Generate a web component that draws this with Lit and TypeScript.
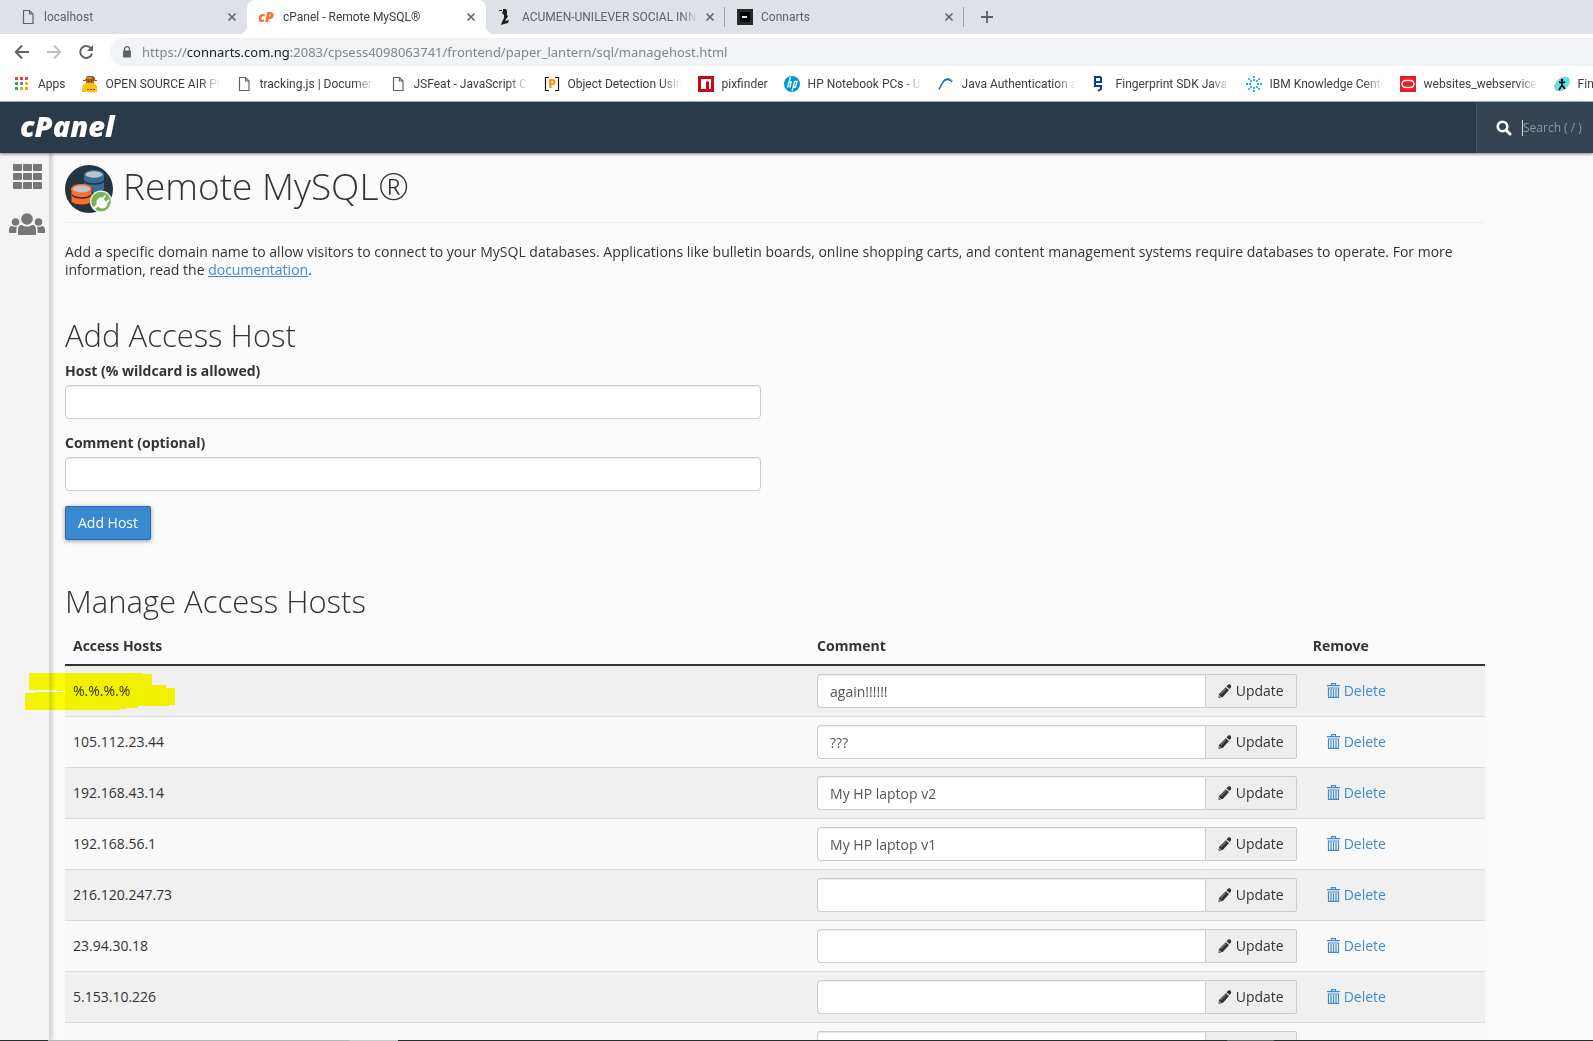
import { LitElement, html, css, svg, nothing } from "lit";
import { customElement, property } from "lit/decorators.js";
import { classMap } from "lit/directives/class-map.js";

/* ---------- icons ---------- */

const pageIcon = html`<svg class="ico" viewBox="0 0 16 16" width="16" height="16" aria-hidden="true">
  <path d="M3.500 1.500h6l3.500 3.500v9.500h-9.500z M9.500 1.500v3.500h3.500" fill="none" stroke="#5f6368" stroke-width="1.200" /></svg>`;

const cpIcon = html`<svg class="ico" viewBox="0 0 16 16" width="16" height="16" aria-hidden="true">
  <text x="-1" y="13" font-family="Open Sans, sans-serif" font-weight="800" font-style="italic" font-size="14" fill="#ff6c2c">cP</text></svg>`;

const acumenIcon = html`<svg class="ico" viewBox="0 0 16 16" width="16" height="16" aria-hidden="true">
  <path d="M5 0h3l1 2v4l1 1-1 2-2 3 4-1-1 3-4 1-3 1 1-3 2-4V6L4 4l1-2z M1 1h3v1H1z" fill="#221f1f" /></svg>`;

const connartsIcon = html`<svg class="ico" viewBox="0 0 16 16" width="16" height="16" aria-hidden="true">
  <rect width="16" height="16" fill="#26282b" /><rect x="3" y="3" width="10" height="10" fill="#000" />
  <rect x="5" y="7" width="5" height="2" fill="#e8e8e8" /></svg>`;

const closeIcon = html`<svg viewBox="0 0 10 10" width="10" height="10" aria-hidden="true">
  <path d="M1.500 1.500l7 7M8.500 1.500l-7 7" stroke="#5f6368" stroke-width="1.600" /></svg>`;

const appsIcon = html`<svg class="ico" viewBox="0 0 16 16" width="16" height="16" aria-hidden="true">
  ${["#ea4335", "#ea4335", "#ea4335", "#34a853", "#4285f4", "#fbbc05", "#34a853", "#f4a70b", "#f4a70b"].map(
    (c, i) => svg`<rect x=${1 + (i % 3) * 5} y=${1 + Math.floor(i / 3) * 5} width="3" height="3" fill=${c} />`,
  )}</svg>`;

const minerIcon = html`<svg class="ico" viewBox="0 0 16 16" width="16" height="16" aria-hidden="true">
  <path d="M4 2l1-2h6l2 2v2h2v1H1v-1h2z" fill="#9a5a1c" /><path d="M5 1h5v2H5z" fill="#d98a1f" />
  <path d="M4 5h8v3H4z" fill="#b9701f" /><path d="M6 5h1v1h-1zM9 5h1v1h-1z" fill="#3a2108" />
  <path d="M1 9l3-2h8l3 3v6H0v-4z" fill="#fdc30a" /><path d="M5 13h2v1H5zM8 13h2v1H8zM11 13h2v1h-2z" fill="#7a4a10" /></svg>`;

const bracketIcon = html`<svg class="ico" viewBox="0 0 16 16" width="16" height="16" aria-hidden="true">
  <path d="M5 1.500H1.500v13H5M11 1.500h3.500v13H11" fill="none" stroke="#111" stroke-width="1.200" />
  <text x="4" y="12" font-family="Open Sans, sans-serif" font-weight="800" font-size="13" fill="#ff9326">P</text></svg>`;

const npmIcon = html`<svg class="ico" viewBox="0 0 16 16" width="16" height="16" aria-hidden="true">
  <rect width="16" height="16" fill="#c90813" /><path d="M3 3h10v10h-2V5.500H8V13H3z" fill="#fff" /></svg>`;

const hpIcon = html`<svg class="ico" viewBox="0 0 16 16" width="16" height="16" aria-hidden="true">
  <circle cx="8" cy="8" r="8" fill="#0096d6" />
  <path d="M6.500 1L3.500 11.500M4.800 6h2.400L5.700 11.500M8 15l2.700-9.500h2.400L11.500 11H9.200" fill="none" stroke="#fff" stroke-width="1.300" /></svg>`;

const javaIcon = html`<svg class="ico" viewBox="0 0 16 16" width="16" height="16" aria-hidden="true">
  <path d="M1 13.500C3 9 5 4.500 8 3.500" fill="none" stroke="#1b65b0" stroke-width="1.400" />
  <path d="M6.500 4C9 2 12 2 14 6c-2-2-4-2.500-6-2z" fill="#1b65b0" stroke="#1b65b0" />
  <path d="M12 2l3 3" stroke="#a9cce8" stroke-width="1" /></svg>`;

const fingerIcon = html`<svg class="ico" viewBox="0 0 16 16" width="16" height="16" aria-hidden="true">
  <path d="M9 1H3v5h6V1M3 6v4h6v3L6 15" fill="none" stroke="#0b3c9c" stroke-width="2" /></svg>`;

const ibmIcon = html`<svg class="ico" viewBox="0 0 16 16" width="16" height="16" aria-hidden="true">
  <g fill="none" stroke="#19a5d8" stroke-width="1.800" stroke-dasharray="2 1">
    <path d="M8 0v5M8 16v-5M0 8h5M16 8h-5M2.300 2.300l3.600 3.600M13.700 13.700l-3.600-3.600M2.300 13.700l3.600-3.600M13.700 2.300l-3.600 3.600" /></g></svg>`;

const oracleIcon = html`<svg class="ico" viewBox="0 0 16 16" width="16" height="16" aria-hidden="true">
  <rect width="16" height="16" fill="#ee1c25" />
  <rect x="2" y="4.500" width="12" height="7" rx="3.500" fill="none" stroke="#fff" stroke-width="1.500" /></svg>`;

const runnerIcon = html`<svg class="ico" viewBox="0 0 16 16" width="16" height="16" aria-hidden="true">
  <ellipse cx="8" cy="8" rx="9" ry="6" transform="rotate(-40 8 8)" fill="#b5c4c4" />
  <path d="M8 2.500h7M5 5h10M2 7.500h13M1 10h12M1 12.500h9" stroke="#1ff" stroke-width="1.400" />
  <circle cx="8" cy="4" r="1.300" /><path d="M8 5v5M5 6l3 1 3-1M8 9l-3 5M8 9l3 4" fill="none" stroke="#000" stroke-width="1.500" /></svg>`;

const backIcon = html`<svg viewBox="0 0 16 16" width="16" height="16" aria-hidden="true">
  <path d="M15 8H2M8 1.500L1.800 8 8 14.500" fill="none" stroke="currentColor" stroke-width="2" /></svg>`;
const forwardIcon = html`<svg viewBox="0 0 16 16" width="16" height="16" aria-hidden="true">
  <path d="M1 8h13M8 1.500L14.200 8 8 14.500" fill="none" stroke="currentColor" stroke-width="2" /></svg>`;
const reloadIcon = html`<svg viewBox="0 0 16 16" width="16" height="16" aria-hidden="true">
  <path d="M13 4.300A6 6 0 1 0 14 9.500" fill="none" stroke="currentColor" stroke-width="2" />
  <path d="M15 1v6H9z" fill="currentColor" /></svg>`;
const lockIcon = html`<svg viewBox="0 0 10 12" width="10" height="12" aria-hidden="true">
  <path d="M2.500 5V3.200a2.500 2.500 0 0 1 5 0V5" fill="none" stroke="#5f6368" stroke-width="1.300" />
  <rect x="1" y="4.500" width="8" height="7" rx="1" fill="#5f6368" /></svg>`;
const plusIcon = html`<svg viewBox="0 0 12 12" width="12" height="12" aria-hidden="true">
  <path d="M6 0v12M0 6h12" stroke="#5f6368" stroke-width="1.800" /></svg>`;

const searchIcon = html`<svg viewBox="0 0 16 16" width="16" height="16" aria-hidden="true">
  <circle cx="6.500" cy="6.500" r="4.800" fill="none" stroke="#fff" stroke-width="2.600" />
  <path d="M10 10l4 4" stroke="#fff" stroke-width="3" stroke-linecap="round" /></svg>`;

const gridIcon = html`<svg viewBox="0 0 30 26" width="30" height="26" aria-hidden="true">
  ${[0, 1, 2, 3, 4, 5, 6, 7, 8].map(
    (i) => svg`<rect x=${(i % 3) * 10 + 1} y=${Math.floor(i / 3) * 9} width="9" height="7" rx="1" fill="#777" />`,
  )}</svg>`;

const usersIcon = html`<svg viewBox="0 0 36 22" width="36" height="22" aria-hidden="true">
  <g fill="#777"><circle cx="18" cy="6" r="5.800" /><circle cx="6.500" cy="9" r="3.800" /><circle cx="29.500" cy="9" r="3.800" />
  <path d="M9 21v-4c0-3 1-5 4-5 3 2 7 2 10 0 3 0 4 2 4 5v4c0 .7-.4 1-1 1H10c-.6 0-1-.3-1-1z" />
  <path d="M0 19v-2c0-2 1-4 3-4 2 1 3 1 5 .8-.6 1.500-.7 3-.7 6.200H1c-.6 0-1-.4-1-1zM36 19v-2c0-2-1-4-3-4-2 1-3 1-5 .8.600 1.500.700 3 .700 6.200H35c.6 0 1-.4 1-1z" /></g></svg>`;

const remoteIcon = html`<svg viewBox="0 0 48 48" width="48" height="48" aria-hidden="true">
  <circle cx="24" cy="24" r="24" fill="#26343f" />
  <path d="M19 9v15h20V9z" fill="#346d9d" /><ellipse cx="29" cy="24" rx="10" ry="3.500" fill="#346d9d" />
  <ellipse cx="29" cy="9.500" rx="10" ry="4.500" fill="#346d9d" /><ellipse cx="29" cy="9.500" rx="8.500" ry="3.200" fill="#bfc3c6" />
  <path d="M19 16c3 4 17 4 20 0" fill="none" stroke="#26343f" stroke-width="1.500" />
  <path d="M6 23h21v14c-4 4-17 4-21 0z" fill="#ff6c2c" stroke="#26343f" stroke-width="1" />
  <ellipse cx="16.500" cy="24" rx="10.500" ry="5" fill="#ff6c2c" /><ellipse cx="16.500" cy="24" rx="8.700" ry="3.400" fill="#bfc3c6" />
  <path d="M7 30c4 4 16 4 19 0" fill="none" stroke="#26343f" stroke-width="1.500" />
  <circle cx="36" cy="36.500" r="11" fill="#fafafa" /><circle cx="36" cy="36.500" r="9.800" fill="#7cb352" />
  <path d="M28 44l5-4" stroke="#fafafa" stroke-width="2.400" />
  <path d="M32 40c-1.500-3 0-5.500 1.800-6.800 1.200-.9 2.400-1.200 3.600-1l5 6.300c.1 1.500-.5 2.700-1.700 3.700-2.300 1.800-5.500 1.500-7.300-.4z" fill="#fafafa" />
  <path d="M38 33.500l2.400-3M41.500 37.500l2.600-2.500" stroke="#fafafa" stroke-width="1.800" /></svg>`;

const pencilIcon = html`<svg viewBox="0 0 14 14" width="14" height="14" aria-hidden="true">
  <path d="M9.500 1.200c.8-1 2.100-1.200 3-.4s.9 2 .2 3l-1 1.200-3.200-2.600z M7.800 3.200L11 5.900 5 12.800l-4.500 1.200.5-4z" fill="#333" />
  <path d="M2.700 10.200L8 4.500" stroke="#fff" stroke-width=".5" /><path d="M1.300 11l1.700 1.500-1.300.4z" fill="#eee" /></svg>`;

const trashIcon = html`<svg viewBox="0 0 13 16" width="13" height="16" aria-hidden="true">
  <path d="M4.500 2V.7h4V2M0 2.700h13M1.500 5h10v9.300h-10zM4 6v8M6.500 6v8M9 6v8" fill="none" stroke="#428bca" stroke-width="1.200" /></svg>`;

/* ---------- browser frame ---------- */

interface Tab { title: string; icon: unknown; active?: boolean; ruled?: boolean; }

const TABS: Tab[] = [
  { title: "localhost", icon: pageIcon },
  { title: "cPanel - Remote MySQL®", icon: cpIcon, active: true },
  { title: "ACUMEN-UNILEVER SOCIAL INNO", icon: acumenIcon, ruled: true },
  { title: "Connarts", icon: connartsIcon, ruled: true },
];

const BOOKMARKS: { title: string; icon: unknown; short?: boolean }[] = [
  { title: "Apps", icon: appsIcon, short: true },
  { title: "OPEN SOURCE AIR PU", icon: minerIcon },
  { title: "tracking.js | Documen", icon: pageIcon },
  { title: "JSFeat - JavaScript Co", icon: pageIcon },
  { title: "Object Detection Usin", icon: bracketIcon },
  { title: "pixfinder", icon: npmIcon, short: true },
  { title: "HP Notebook PCs - U", icon: hpIcon },
  { title: "Java Authentication a", icon: javaIcon },
  { title: "Fingerprint SDK Java -", icon: fingerIcon },
  { title: "IBM Knowledge Cente", icon: ibmIcon },
  { title: "websites_webservices", icon: oracleIcon },
  { title: "Fingerprint", icon: runnerIcon },
];

@customElement("browser-frame")
export class BrowserFrame extends LitElement {
  static styles = css`
    :host { display: block; flex: none; font: 12px/16px Roboto, "Open Sans", sans-serif; color: #3c4043; }
    * { box-sizing: border-box; }
    svg { display: block; flex: none; }
    button { border: 0; padding: 0; background: none; color: inherit; font: inherit; display: flex; }
    .tabs { display: flex; height: 34px; padding-left: 8px; background: #dee1e6; overflow: hidden; }
    .tab { position: relative; display: flex; align-items: center; gap: 8px; width: 239px; padding: 0 10px 0 12px; color: #5f6368; }
    .tab.active { background: #fff; border-radius: 8px 8px 0 0; color: #3c4043; }
    .tab.active::before, .tab.active::after { content: ""; position: absolute; bottom: 0; width: 8px; height: 8px; }
    .tab.active::before { left: -8px; background: radial-gradient(circle at 0 0, #dee1e6 8px, #fff 8px); }
    .tab.active::after { right: -8px; background: radial-gradient(circle at 100% 0, #dee1e6 8px, #fff 8px); }
    .tab.ruled::after { content: ""; position: absolute; right: 0; top: 7px; width: 1px; height: 20px; background: #9ea1a6; }
    .title { flex: 1; overflow: hidden; white-space: nowrap; mask-image: linear-gradient(to left, transparent, #000 16px); }
    .new { align-items: center; padding-left: 17px; }
    .toolbar { display: flex; align-items: center; gap: 16px; height: 36px; padding-left: 14px; background: #fff; color: #5f6368; }
    .dim { color: #bdc1c6; }
    .omnibox { flex: 1; display: flex; align-items: center; gap: 10px; height: 28px; margin-right: -16px; padding: 0 16px 0 12px; border-radius: 14px; background: #f1f3f4; font: 13px/20px "Noto Sans", sans-serif; color: #80868b; }
    .omnibox b { font-weight: 400; color: #202124; }
    .bookmarks { display: flex; align-items: center; gap: 16px; height: 32px; padding: 0 0 3px 14px; background: #fff; border-bottom: 1px solid #b6b4b6; overflow: hidden; }
    .mark { flex: none; display: flex; align-items: center; gap: 8px; color: inherit; text-decoration: none; }
    .label { width: 114px; overflow: hidden; white-space: nowrap; mask-image: linear-gradient(to left, transparent, #000 20px); }
    .label.short { width: auto; mask-image: none; }
  `;

  render() {
    return html`
      <div class="tabs">
        ${TABS.map((t) => html`<div class=${classMap({ tab: true, active: !!t.active, ruled: !!t.ruled })}>
          ${t.icon}<span class="title">${t.title}</span><button aria-label="Close tab">${closeIcon}</button>
        </div>`)}
        <button class="new" aria-label="New tab">${plusIcon}</button>
      </div>
      <div class="toolbar">
        <button aria-label="Back">${backIcon}</button>
        <button class="dim" aria-label="Forward">${forwardIcon}</button>
        <button aria-label="Reload">${reloadIcon}</button>
        <div class="omnibox">${lockIcon}<span>https://<b>connarts.com.ng</b>:2083/cpsess4098063741/frontend/paper_lantern/sql/managehost.html</span></div>
      </div>
      <nav class="bookmarks">
        ${BOOKMARKS.map((b) => html`<a class="mark" href="#">${b.icon}<span class=${classMap({ label: true, short: !!b.short })}>${b.title}</span></a>`)}
      </nav>`;
  }
}

/* ---------- access host table ---------- */

interface Host { address: string; comment: string; marked?: boolean; }

@customElement("host-table")
export class HostTable extends LitElement {
  @property({ attribute: false }) hosts: Host[] = [];

  static styles = css`
    :host { display: block; }
    * { box-sizing: border-box; }
    svg { display: block; flex: none; }
    table { width: 100%; table-layout: fixed; border-collapse: separate; border-spacing: 0; }
    .c-host { width: 52.4%; }
    .c-comment { width: 34.9%; }
    th { height: 48px; padding: 8px 8px 9px; vertical-align: bottom; text-align: left; font-weight: 700; border-bottom: 2px solid #333; }
    td { height: 51px; padding: 8px; border-bottom: 1px solid #ddd; background: #f9f9f9; }
    tr:nth-child(odd) td { background: #f0f0f0; }
    .address { position: relative; }
    .group { display: flex; height: 34px; }
    input { flex: 1; min-width: 0; padding: 2px 12px 0; border: 1px solid #ccc; border-right: 0; border-radius: 4px 0 0 4px; background: #fff; box-shadow: inset 0 1px 1px rgba(0, 0, 0, 0.075); font: inherit; color: #555; }
    button { display: flex; align-items: center; gap: 4px; padding: 0 12px; border: 1px solid #ccc; border-radius: 0 2px 2px 0; background: #eee; font: inherit; color: #333; }
    .delete { display: flex; align-items: center; gap: 4px; padding-left: 14px; color: #428bca; text-decoration: none; }
    .marker { position: absolute; left: -40px; top: 7px; mix-blend-mode: multiply; pointer-events: none; }
  `;

  render() {
    return html`<table>
      <colgroup><col class="c-host" /><col class="c-comment" /><col /></colgroup>
      <thead><tr><th>Access Hosts</th><th>Comment</th><th>Remove</th></tr></thead>
      <tbody>
        ${this.hosts.map((h) => html`<tr>
          <td class="address">${h.address}${h.marked
            ? html`<svg class="marker" viewBox="0 0 150 37" width="150" height="37" aria-hidden="true">
                <path fill="#ff0" d="M4 0h113v1h10v11h14v3h9v17h-6v1h-31v2h-12v1h-6v1H0V20h10v-1h30v-1h-8v-1H4z" /></svg>`
            : nothing}</td>
          <td><div class="group">
            <input type="text" aria-label="Comment for ${h.address}" .value=${h.comment} />
            <button type="button">${pencilIcon}Update</button>
          </div></td>
          <td><a class="delete" href="#">${trashIcon}Delete</a></td>
        </tr>`)}
      </tbody>
    </table>`;
  }
}

const HOSTS: Host[] = [
  { address: "%.%.%.%", comment: "again!!!!!!", marked: true },
  { address: "105.112.23.44", comment: "???" },
  { address: "192.168.43.14", comment: "My HP laptop v2" },
  { address: "192.168.56.1", comment: "My HP laptop v1" },
  { address: "216.120.247.73", comment: "" },
  { address: "23.94.30.18", comment: "" },
  { address: "5.153.10.226", comment: "" },
  { address: "", comment: "" },
];

/* ---------- page ---------- */

@customElement("app-root")
export class AppRoot extends LitElement {
  static styles = css`
    :host { display: flex; flex-direction: column; height: 100vh; overflow: hidden; background: #fafafa; font: 14px/18px "Open Sans", sans-serif; color: #333; }
    * { box-sizing: border-box; }
    svg { display: block; flex: none; }
    h1, h2, p { margin: 0; font-weight: 300; }
    .header { flex: none; display: flex; align-items: stretch; justify-content: space-between; height: 51px; background: #293a4a; box-shadow: 0 1px 3px rgba(0, 0, 0, 0.5); z-index: 1; }
    .logo { padding-left: 20px; font: italic 800 29px/48px "Open Sans", sans-serif; color: #fff; text-decoration: none; }
    .search { display: flex; align-items: center; gap: 10px; width: 117px; padding-left: 19px; border-left: 1px solid #435364; background: #354454; }
    .search input { flex: 1; min-width: 0; padding: 0; border: 0; border-left: 1px solid #ddd; outline: 0; background: none; height: 16px; font: 12px/16px "Open Sans", sans-serif; color: #fff; }
    .search input::placeholder { color: #8d979f; }
    .body { flex: 1; min-height: 0; display: flex; overflow: hidden; }
    .side { flex: none; display: flex; flex-direction: column; align-items: center; gap: 23px; width: 51px; padding: 11px 0 0 5px; background: #f4f4f4; border-right: 2px solid #d9d9d9; box-shadow: 1px 0 4px rgba(0, 0, 0, 0.2); }
    .main { flex: 1; min-width: 0; padding: 12px 108px 0 14px; }
    .title { display: flex; gap: 10px; height: 58px; border-bottom: 1px solid #eee; }
    .title h1 { font-size: 37px; line-height: 42px; }
    .intro { padding-top: 20px; font-weight: 400; }
    .intro a { color: #428bca; }
    h2 { font-size: 31px; line-height: 34px; }
    .add { display: flex; flex-direction: column; align-items: flex-start; padding-top: 39px; width: 49%; }
    .add label { padding: 10px 0 5px; font-weight: 700; }
    .add label + input { width: 100%; height: 34px; padding: 0 12px; border: 1px solid #ccc; border-radius: 4px; background: #fff; box-shadow: inset 0 1px 1px rgba(0, 0, 0, 0.075); font: inherit; }
    .add .second { padding-top: 15px; }
    .add button { margin-top: 15px; height: 34px; padding: 0 12px; border: 1px solid #2a6fb5; border-radius: 2px; background: #3889d0; box-shadow: 0 1px 4px rgba(0, 0, 0, 0.4); color: #fff; font: inherit; }
    .manage { padding-top: 44px; }
    .taskbar { flex: none; display: flex; height: 1px; background: #2b2b2d; z-index: 2; }
    .taskbar .light { margin-left: 3%; width: 19%; background: #b8b8b8; }
    .taskbar .lighter { width: 3%; background: #ccc; }
    .taskbar .item { margin-left: 52%; width: 3%; background: #666; }
  `;

  render() {
    return html`
      <browser-frame></browser-frame>
      <header class="header">
        <a class="logo" href="#">cPanel</a>
        <label class="search">${searchIcon}<input type="text" placeholder="Search ( / )" aria-label="Search" /></label>
      </header>
      <div class="body">
        <nav class="side"><a href="#" aria-label="Home">${gridIcon}</a><a href="#" aria-label="Users">${usersIcon}</a></nav>
        <main class="main">
          <div class="title">${remoteIcon}<h1>Remote MySQL®</h1></div>
          <p class="intro">Add a specific domain name to allow visitors to connect to your MySQL databases. Applications like bulletin boards, online shopping carts, and content management systems require databases to operate. For more information, read the <a href="#">documentation</a>.</p>
          <form class="add">
            <h2>Add Access Host</h2>
            <label for="host">Host (% wildcard is allowed)</label><input id="host" type="text" />
            <label class="second" for="comment">Comment (optional)</label><input id="comment" type="text" />
            <button type="button">Add Host</button>
          </form>
          <section class="manage">
            <h2>Manage Access Hosts</h2>
            <host-table .hosts=${HOSTS}></host-table>
          </section>
        </main>
      </div>
      <div class="taskbar"><span class="light"></span><span class="lighter"></span><span class="item"></span></div>`;
  }
}
